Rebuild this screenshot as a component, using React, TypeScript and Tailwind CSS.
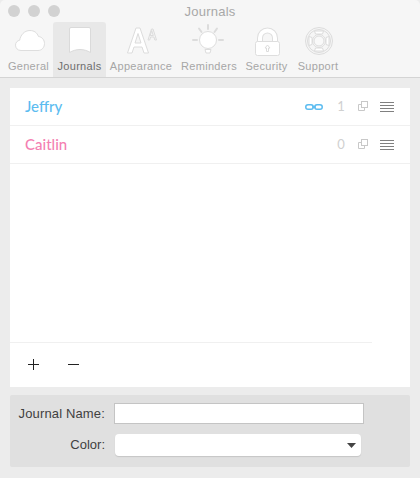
import type { ReactNode } from 'react';

const sans = 'font-["Liberation_Sans",Arial,sans-serif]';

const stroke = { fill: 'none', stroke: '#dcdcdc', strokeWidth: 1 };

function Icon({ children }: { children: ReactNode }) {
  return (
    <svg width="46" height="36" viewBox="0 0 46 36" className="block">
      {children}
    </svg>
  );
}

const tabs: { label: string; width: string; active?: boolean; icon: ReactNode }[] = [
  {
    label: 'General',
    width: 'w-[49px]',
    icon: (
      <Icon>
        <path
          d="M15 28.500c-3.500 0-5.500-2.500-5.500-5.300 0-2.700 1.700-4.500 4.200-5 .8-5 4.500-9.700 10.300-9.700 4 0 7 2 8.500 6 3.500.3 6 3.500 6 7 0 3.700-2.500 7-6.500 7z"
          fill="#fff"
          stroke="#dedede"
        />
      </Icon>
    ),
  },
  {
    label: 'Journals',
    width: 'w-[53px]',
    active: true,
    icon: (
      <Icon>
        <path
          d="M14 5.500h18a1.500 1.500 0 0 1 1.500 1.500v23.500c-3-1.700-6.500-3-10.500-3s-7.500 1.300-10.500 3V7a1.500 1.500 0 0 1 1.500-1.500z"
          fill="#fff"
          stroke="#dadada"
        />
      </Icon>
    ),
  },
  {
    label: 'Appearance',
    width: 'w-[70px]',
    icon: (
      <Icon>
        <path
          d="M9.500 31 18 6h4l8.500 25h-4.500l-2-6h-8l-2 6zM17 21h6l-3-9.500z"
          fill="#fff"
          stroke="#dcdcdc"
          fillRule="evenodd"
        />
        <path d="M30 18l3.500-11h1.500L38.500 18h-1.700l-.9-3h-3.300l-.9 3zM32.200 13.500h3.100L33.700 8.500z" {...stroke} fillRule="evenodd" />
      </Icon>
    ),
  },
  {
    label: 'Reminders',
    width: 'w-[66px]',
    icon: (
      <Icon>
        <circle cx="22" cy="18" r="8.500" fill="#fff" stroke="#dedede" />
        <path
          d="M22 3v4M13 6.500l2.500 3.500M31 6.500l-2.500 3.500M7 18h4M33 18h4"
          fill="none"
          stroke="#dcdcdc"
          strokeWidth="2"
          strokeLinecap="round"
        />
        <path d="M19 27.500h6l-1 3.500h-4z" fill="#fff" stroke="#dcdcdc" />
      </Icon>
    ),
  },
  {
    label: 'Security',
    width: 'w-[49px]',
    icon: (
      <Icon>
        <path d="M16 20v-4a7.500 7.500 0 0 1 15 0v4" fill="none" stroke="#dedede" strokeWidth="6" />
        <path d="M16 20v-4a7.500 7.500 0 0 1 15 0v4" fill="none" stroke="#fff" strokeWidth="4" />
        <rect x="11.500" y="19.500" width="24" height="14" rx="2" fill="#fff" stroke="#dedede" />
        <path d="M23.500 23l-2.500 3h1.500v3.500h2V26h1.500z" {...stroke} />
      </Icon>
    ),
  },
  {
    label: 'Support',
    width: 'w-[54px]',
    icon: (
      <Icon>
        <g transform="translate(1 1)">
          <circle cx="23" cy="18" r="13.500" fill="#f6f6f6" stroke="#dcdcdc" />
          <circle cx="23" cy="18" r="11.500" {...stroke} />
          <circle cx="23" cy="18" r="6.500" fill="#f9f9f9" stroke="#dcdcdc" />
          <circle cx="23" cy="18" r="5" {...stroke} />
          <path d="M18.500 8h9l-1 3h-7zM18.500 28h9l-1-3h-7zM13 13.500v9l3-1v-7zM33 13.500v9l-3-1v-7z" fill="#fff" stroke="#dcdcdc" />
        </g>
      </Icon>
    ),
  },
];

const journals = [
  { name: 'Jeffry', color: 'text-[#5cbcf0]', count: 1, linked: true },
  { name: 'Caitlin', color: 'text-[#f47fb2]', count: 0, linked: false },
];

function Row({ name, color, count, linked }: (typeof journals)[number]) {
  return (
    <div className="flex h-[38px] items-center border-b border-[#f0f0f0] pl-[15px]">
      <span className={`font-["Lato",sans-serif] text-[15px] font-medium ${color}`}>{name}</span>
      <div className="ml-auto flex items-center">
        {linked && (
          <svg width="18" height="6" viewBox="0 0 18 6" className="block">
            <rect x="0.750" y="0.750" width="7.500" height="4.500" rx="2.250" fill="none" stroke="#5cbcf0" strokeWidth="1.500" />
            <rect x="9.750" y="0.750" width="7.500" height="4.500" rx="2.250" fill="none" stroke="#5cbcf0" strokeWidth="1.500" />
            <path d="M7 3h4" stroke="#5cbcf0" strokeWidth="1.500" />
          </svg>
        )}
        <span className={`ml-[14px] w-[8px] text-center font-["Lato",sans-serif] text-[13px] leading-none text-[#d0d0d0]`}>
          {count}
        </span>
        <svg width="10" height="10" viewBox="0 0 10 10" className="mb-[1px] ml-[13px] block">
          <rect x="3.500" y="0.500" width="6" height="6" fill="none" stroke="#c8c8c8" />
          <path d="M3 3.500H0.500v6h6V7" fill="none" stroke="#c8c8c8" />
        </svg>
        <div className="mr-[16px] ml-[12px] flex w-[14px] flex-col gap-[2px]">
          <div className="h-px bg-[#808080]" />
          <div className="h-px bg-[#808080]" />
          <div className="h-px bg-[#808080]" />
          <div className="h-px bg-[#808080]" />
        </div>
      </div>
    </div>
  );
}

export default function App() {
  return (
    <div className={`flex h-[478px] w-[420px] flex-col overflow-hidden bg-[#ececec] ${sans}`}>
      <div className="h-[78px] shrink-0 rounded-t-[5px] border-b border-[#d4d4d4] bg-[#f6f6f6]">
        <div className="flex h-[22px] items-center">
          <div className="flex gap-[8px] pl-[8px]">
            <div className="h-[12px] w-[12px] rounded-full bg-[#d2d2d2]" />
            <div className="h-[12px] w-[12px] rounded-full bg-[#d2d2d2]" />
            <div className="h-[12px] w-[12px] rounded-full bg-[#d2d2d2]" />
          </div>
          <div className="mt-[1px] ml-[104px] w-[92px] text-center text-[13px] tracking-[0.25px] text-[#a8a8a8]">Journals</div>
        </div>
        <div className="flex pl-[4px]">
          {tabs.map((tab) => (
            <div
              key={tab.label}
              className={`flex h-[55px] flex-col items-center rounded-t-[3px] ${tab.width} ${tab.active ? 'bg-[#e8e8e8]' : ''}`}
            >
              <div className="h-[36px]">{tab.icon}</div>
              <span className={`mt-[1px] text-[11px] leading-[14px] tracking-[0.3px] whitespace-nowrap ${tab.active ? 'text-[#6e6e6e]' : 'text-[#a6a6a6]'}`}>
                {tab.label}
              </span>
            </div>
          ))}
        </div>
      </div>

      <div className="flex flex-1 flex-col px-[10px] pt-[10px]">
        <div className="flex h-[299px] flex-col bg-white">
          {journals.map((j) => (
            <Row key={j.name} {...j} />
          ))}
          <div className="flex-1" />
          <div className="mr-[38px] flex h-[45px] items-center gap-[29px] border-t border-[#f0f0f0] pb-[2px] pl-[18px]">
            <svg width="11" height="11" viewBox="0 0 11 11" className="block">
              <path d="M5.500 0v11M0 5.500h11" stroke="#222" />
            </svg>
            <svg width="11" height="11" viewBox="0 0 11 11" className="block">
              <path d="M0 5.500h11" stroke="#222" />
            </svg>
          </div>
        </div>

        <div className="mt-[8px] h-[72px] rounded-[2px] bg-[#e0e0e0] pt-[8px]">
          <div className="flex h-[21px] items-center">
            <label className="w-[95px] text-right text-[13px] tracking-[0.15px] whitespace-nowrap text-[#404040]">Journal Name:</label>
            <div className="ml-[9px] h-[21px] w-[250px] border border-[#c4c4c4] bg-white" />
          </div>
          <div className="mt-[10px] flex h-[22px] items-center">
            <label className="w-[95px] text-right text-[13px] text-[#404040]">Color:</label>
            <div className="ml-[10px] flex h-[22px] w-[246px] items-center justify-end rounded-[4px] bg-white pr-[5px] shadow-[0_1px_1px_rgba(0,0,0,0.12)]">
              <svg width="9" height="5" viewBox="0 0 9 5" className="block">
                <path d="M0 0h9L4.500 5z" fill="#444" />
              </svg>
            </div>
          </div>
        </div>
      </div>
    </div>
  );
}
